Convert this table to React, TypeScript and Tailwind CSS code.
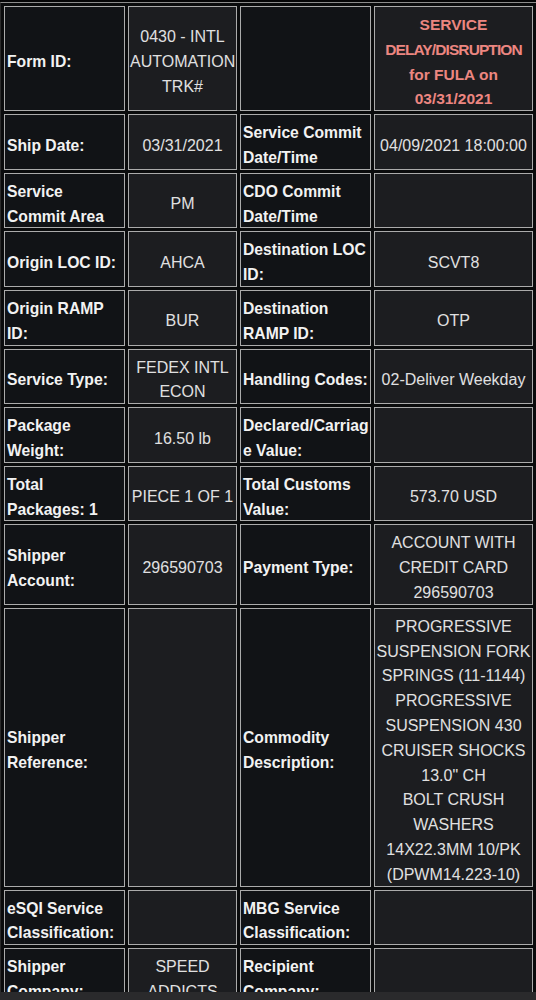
import React from "react";

type Row = {
  l1: string[];
  v1: string[];
  l2: string[];
  v2: string[];
  red?: boolean;
};

const rows: Row[] = [
  { l1: ["Form ID:"], v1: ["0430 - INTL", "AUTOMATION", "TRK#"], l2: [], v2: ["SERVICE", "DELAY/DISRUPTION", "for FULA on", "03/31/2021"], red: true },
  { l1: ["Ship Date:"], v1: ["03/31/2021"], l2: ["Service Commit", "Date/Time"], v2: ["04/09/2021 18:00:00"] },
  { l1: ["Service", "Commit Area"], v1: ["PM"], l2: ["CDO Commit", "Date/Time"], v2: [] },
  { l1: ["Origin LOC ID:"], v1: ["AHCA"], l2: ["Destination LOC", "ID:"], v2: ["SCVT8"] },
  { l1: ["Origin RAMP", "ID:"], v1: ["BUR"], l2: ["Destination", "RAMP ID:"], v2: ["OTP"] },
  { l1: ["Service Type:"], v1: ["FEDEX INTL", "ECON"], l2: ["Handling Codes:"], v2: ["02-Deliver Weekday"] },
  { l1: ["Package", "Weight:"], v1: ["16.50 lb"], l2: ["Declared/Carriag", "e Value:"], v2: [] },
  { l1: ["Total", "Packages: 1"], v1: ["PIECE 1 OF 1"], l2: ["Total Customs", "Value:"], v2: ["573.70 USD"] },
  { l1: ["Shipper", "Account:"], v1: ["296590703"], l2: ["Payment Type:"], v2: ["ACCOUNT WITH", "CREDIT CARD", "296590703"] },
  {
    l1: ["Shipper", "Reference:"],
    v1: [],
    l2: ["Commodity", "Description:"],
    v2: [
      "PROGRESSIVE",
      "SUSPENSION FORK",
      "SPRINGS (11-1144)",
      "PROGRESSIVE",
      "SUSPENSION 430",
      "CRUISER SHOCKS",
      '13.0" CH',
      "BOLT CRUSH",
      "WASHERS",
      "14X22.3MM 10/PK",
      "(DPWM14.223-10)",
    ],
  },
  { l1: ["eSQI Service", "Classification:"], v1: [], l2: ["MBG Service", "Classification:"], v2: [] },
  { l1: ["Shipper", "Company:"], v1: ["SPEED", "ADDICTS"], l2: ["Recipient", "Company:"], v2: [] },
];

function Label({ lines, w }: { lines: string[]; w?: string }) {
  return (
    <td
      className={`border border-[#ababab] bg-[#111316] px-[2px] pt-[4px] pb-0 align-middle text-left font-bold text-[15.7px] text-[#f2f2f2] whitespace-nowrap overflow-visible ${w ?? ""}`}
    >
      {lines.map((t, i) => (
        <div key={i} className="pt-[4px] leading-[20.8px]">
          {t}
        </div>
      ))}
    </td>
  );
}

function Value({ lines, red, w }: { lines: string[]; red?: boolean; w?: string }) {
  return (
    <td
      className={`border border-[#ababab] bg-[#1c1d20] px-[1px] pt-[4px] pb-0 align-middle text-center whitespace-nowrap ${
        red ? "font-bold text-[15.5px] text-[#ec8680]" : "text-[16px] text-[#e0e0e0]"
      } ${w ?? ""}`}
    >
      {lines.map((t, i) => (
        <div
          key={i}
          className={`pt-[4px] leading-[20.8px] ${red && t === "DELAY/DISRUPTION" ? "tracking-[-0.9px]" : ""}`}
        >
          {t}
        </div>
      ))}
    </td>
  );
}

export default function App() {
  return (
    <div className="w-[536px] min-h-[1000px] bg-[#050506] overflow-hidden font-['Liberation_Sans',Arial,Helvetica,sans-serif]">
      <div className="h-[2px]" />
      <table className="table-fixed w-[536px] border-separate border-spacing-[3px] border-t border-l border-t-[#8c8c8c] border-l-[#2a2a2a] bg-[#0a0b0c]">
        <tbody>
          {rows.map((r, i) => (
            <tr key={i}>
              <Label lines={r.l1} w={i === 0 ? "w-[121px]" : ""} />
              <Value lines={r.v1} w={i === 0 ? "w-[109px]" : ""} />
              <Label lines={r.l2} w={i === 0 ? "w-[131px]" : ""} />
              <Value lines={r.v2} red={r.red} w={i === 0 ? "w-[159px]" : ""} />
            </tr>
          ))}
        </tbody>
      </table>
      <div className="fixed bottom-0 left-0 w-[536px] h-[8px] bg-[#2a2a2c]" />
    </div>
  );
}
